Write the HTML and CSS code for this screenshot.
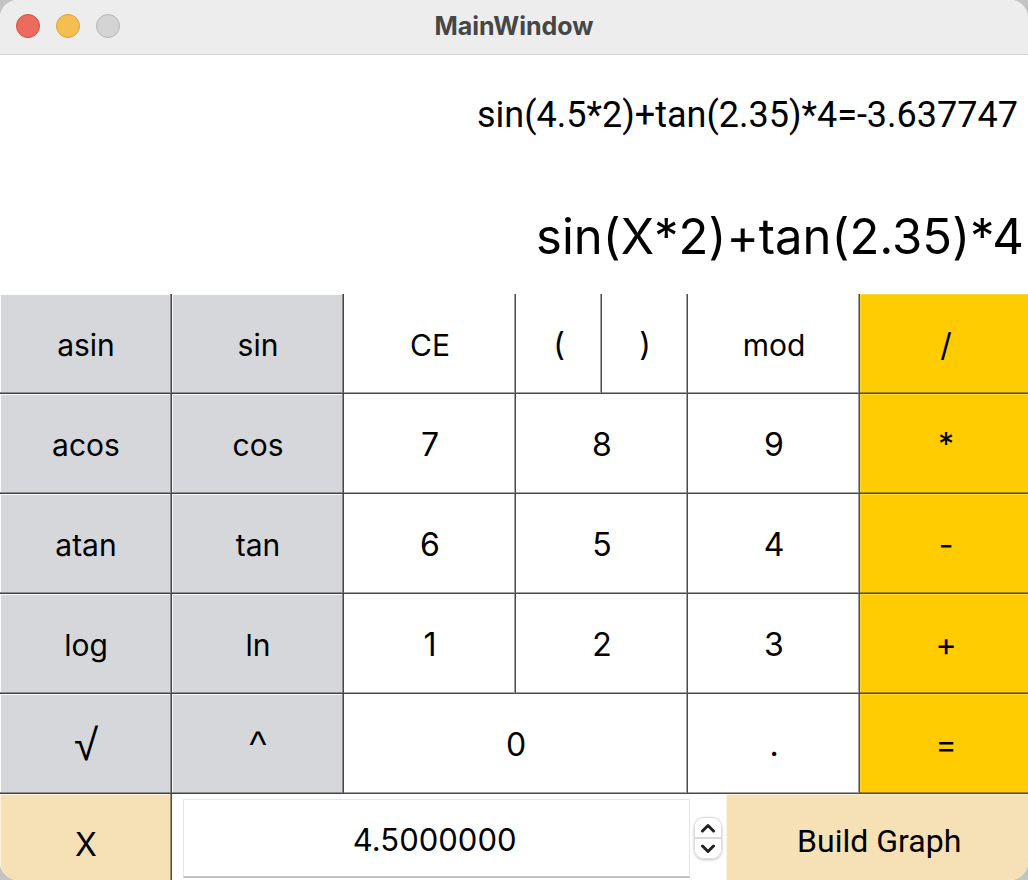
FILE: index.html
```html
<!DOCTYPE html>
<html lang="en">
<head>
<meta charset="utf-8">
<meta name="viewport" content="width=device-width, initial-scale=1">
<title>MainWindow</title>
<link rel="stylesheet" href="styles.css">
</head>
<body>
<main class="window">
  <header class="titlebar">
    <div class="controls">
      <button class="dot close" aria-label="Close"></button>
      <button class="dot minimize" aria-label="Minimize"></button>
      <button class="dot zoom" aria-label="Zoom" disabled></button>
    </div>
    <h1 class="title">MainWindow</h1>
  </header>
  <section class="display">
    <output class="result">sin(4.5*2)+tan(2.35)*4=-3.637747</output>
    <output class="expression">sin(X*2)+tan(2.35)*4</output>
  </section>
  <section class="keypad">
    <button class="key fn">asin</button>
    <button class="key fn">sin</button>
    <button class="key word">CE</button>
    <button class="key half">(</button>
    <button class="key half">)</button>
    <button class="key word">mod</button>
    <button class="key op">/</button>
    <button class="key fn">acos</button>
    <button class="key fn">cos</button>
    <button class="key">7</button>
    <button class="key">8</button>
    <button class="key">9</button>
    <button class="key op">*</button>
    <button class="key fn">atan</button>
    <button class="key fn">tan</button>
    <button class="key">6</button>
    <button class="key">5</button>
    <button class="key">4</button>
    <button class="key op">-</button>
    <button class="key fn">log</button>
    <button class="key fn">ln</button>
    <button class="key">1</button>
    <button class="key">2</button>
    <button class="key">3</button>
    <button class="key op">+</button>
    <button class="key fn root">√</button>
    <button class="key fn power">^</button>
    <button class="key wide">0</button>
    <button class="key">.</button>
    <button class="key op">=</button>
    <button class="key var">X</button>
    <div class="entry">
      <input class="value" type="text" inputmode="decimal" aria-label="X value" value="4.5000000">
      <div class="stepper">
        <button class="step" aria-label="Increase"><svg width="16" height="10" viewBox="0 0 16 10"><path d="M2.5 8 8 2.5 13.5 8"/></svg></button>
        <button class="step" aria-label="Decrease"><svg width="16" height="10" viewBox="0 0 16 10"><path d="M2.5 2 8 7.5 13.5 2"/></svg></button>
      </div>
      <button class="graph">Build Graph</button>
    </div>
  </section>
</main>
</body>
</html>
```
FILE: styles.css
```css
* { box-sizing: border-box; }
body {
  margin: 0;
  background: #c4c4c4;
  font-family: Inter, "Liberation Sans", sans-serif;
  font-feature-settings: "calt" 0;
  color: #000;
}
button, input {
  font: inherit;
  font-feature-settings: inherit;
  color: inherit;
  border: 0;
  padding: 0;
  margin: 0;
}
.window {
  display: flex;
  flex-direction: column;
  height: 100vh;
  overflow: hidden;
  background: #fff;
  border-radius: 18px;
}
.titlebar {
  display: grid;
  grid-template-columns: 1fr auto 1fr;
  align-items: center;
  flex: none;
  height: 55px;
  padding: 0 16px 2px;
  background: #ededed;
  border-bottom: 1px solid #d6d6d6;
}
.controls { display: flex; gap: 16px; }
.dot {
  width: 24px;
  height: 24px;
  border-radius: 50%;
  border: 1px solid;
}
.close { background: #ec6a5e; border-color: #d1503f; }
.minimize { background: #f4bf4f; border-color: #d6a243; }
.zoom { background: #d4d4d4; border-color: #b4b4b4; }
.title {
  margin: 0;
  font-size: 25px;
  font-weight: 700;
  line-height: 32px;
  color: #464646;
}
.display {
  flex: 1;
  display: flex;
  flex-direction: column;
  justify-content: space-between;
  align-items: flex-end;
  min-height: 200px;
  padding: 36px 4px 25px;
}
.result {
  padding-right: 6px;
  font-family: Roboto, "Liberation Sans", sans-serif;
  font-size: 36px;
  line-height: 48px;
}
.expression { font-size: 49px; line-height: 64px; }
.keypad {
  flex: none;
  display: grid;
  grid-template-columns: repeat(12, 1fr);
  grid-template-rows: repeat(5, 100px) 86px;
  margin-right: -4px;
}
.key {
  grid-column: span 2;
  min-width: 0;
  padding-top: 2px;
  font-size: 32px;
  line-height: 40px;
  background: #fff;
  box-shadow: inset -1px -1px #4c4c4c, inset -2px -2px #a0a0a0, inset 1px 1px #fff;
}
.half { grid-column: span 1; }
.wide { grid-column: span 4; }
.fn {
  font-size: 30px;
  background: #d6d7db;
  box-shadow: inset -1px -1px #454547, inset -2px -2px #8c8c8f, inset 1px 1px #fafafa;
}
.word { font-size: 30px; }
.root, .power { font-family: "Liberation Sans", sans-serif; }
.root { font-size: 44px; }
.power { font-size: 36px; }
.op {
  background: #ffcc02;
  box-shadow: inset 0 -1px #5c4a00, inset 0 -2px #a68500, inset 1px 1px #ffd940;
}
.var {
  height: 100px;
  background: #f6e1b7;
  box-shadow: inset -1px 0 #504a3c, inset -2px 0 #a09277, inset 1px 1px #fdf4df;
}
.entry {
  grid-column: span 10;
  display: flex;
  padding-left: 11px;
}
.value {
  flex: 1;
  min-width: 0;
  height: 79px;
  margin-top: 5px;
  padding: 2px 4px 0 0;
  font-size: 31px;
  text-align: center;
  background: #fff;
  border: 1px solid #e6e6e6;
  border-bottom: 2px solid #c2c2c2;
}
.stepper {
  display: flex;
  flex-direction: column;
  flex: none;
  width: 28px;
  height: 42px;
  margin: 23px 4px 0;
  overflow: hidden;
  border: 1px solid #dcdcdc;
  border-radius: 10px;
  box-shadow: 0 1px 3px #00000040;
}
.step {
  display: grid;
  place-items: center;
  flex: 1;
  background: #fff;
}
.step + .step { border-top: 2px solid #dadada; }
.step svg {
  fill: none;
  stroke: #222;
  stroke-width: 3;
  stroke-linecap: round;
  stroke-linejoin: round;
}
.graph {
  flex: none;
  width: 36%;
  height: 94px;
  font-family: Roboto, "Liberation Sans", sans-serif;
  font-size: 32px;
  background: #f6e1b7;
  box-shadow: inset 1px 1px #fdf4df;
}
```
